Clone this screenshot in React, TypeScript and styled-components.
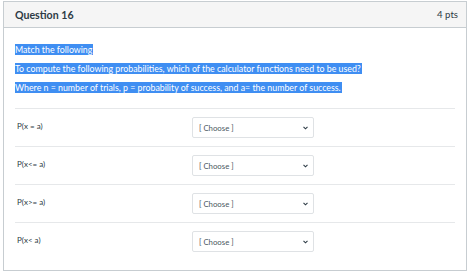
import styled, { createGlobalStyle } from "styled-components";

const GlobalStyle = createGlobalStyle`
  body {
    margin: 0;
    background: #ffffff;
    font-family: Lato, "Open Sans", sans-serif;
    color: #2d3b45;
  }
`;

const Card = styled.div`
  margin: 1px 0 0 3px;
  width: 464px;
  height: 270px;
  border: 1px solid #c7cdd1;
  box-sizing: border-box;
  display: flex;
  flex-direction: column;
`;

const Header = styled.div`
  height: 26px;
  box-sizing: border-box;
  background: #f5f5f5;
  border-bottom: 1px solid #c7cdd1;
  display: flex;
  align-items: center;
  justify-content: space-between;
  padding: 0 8px 0 11px;
`;

const Title = styled.div`
  font-size: 10.6px;
  font-weight: 700;
  color: #2d3b45;
`;

const Points = styled.div`
  font-size: 9.6px;
  color: #2d3b45;
`;

const Body = styled.div`
  padding: 16px 11px 0 11px;
`;

const Prompt = styled.p`
  margin: 0 0 7px;
  font-size: 8.8px;
  line-height: 12px;
`;

const Highlight = styled.span`
  background: #3f8ef2;
  color: #ffffff;
  padding: 0 1px 0 0;
`;

const Answers = styled.div`
  margin-top: 14px;
`;

const Row = styled.div`
  height: 38px;
  box-sizing: border-box;
  border-top: 1px solid #e6e8ea;
  display: grid;
  grid-template-columns: 175px 122px;
  align-items: center;
  padding-left: 2px;
`;

const Label = styled.div`
  font-size: 8px;
  margin-top: -3px;
`;

const Select = styled.div`
  height: 21px;
  box-sizing: border-box;
  border: 1px solid #dfe2e5;
  border-radius: 2px;
  display: flex;
  align-items: center;
  justify-content: space-between;
  padding: 0 5px 0 6px;
  font-size: 7.8px;
  color: #4a5862;
  background: #fff;
`;

const Chevron = () => (
  <svg width="5" height="4" viewBox="0 0 5 4">
    <path d="M0.5 0.8 L2.5 2.8 L4.5 0.8" fill="none" stroke="#2d3b45" strokeWidth="1.1" />
  </svg>
);

const labels = ["P(x = a)", "P(x<= a)", "P(x>= a)", "P(x< a)"];

export default function App() {
  return (
    <>
      <GlobalStyle />
      <Card>
        <Header>
          <Title>Question 16</Title>
          <Points>4 pts</Points>
        </Header>
        <Body>
          <Prompt>
            <Highlight>Match the following</Highlight>
          </Prompt>
          <Prompt>
            <Highlight>
              To compute the following probabilities, which of the calculator functions need to be used?
            </Highlight>
          </Prompt>
          <Prompt>
            <Highlight>
              Where n = number of trials, p = probability of success, and a= the number of success.
            </Highlight>
          </Prompt>
          <Answers>
            {labels.map((l) => (
              <Row key={l}>
                <Label>{l}</Label>
                <Select>
                  <span>[ Choose ]</span>
                  <Chevron />
                </Select>
              </Row>
            ))}
          </Answers>
        </Body>
      </Card>
    </>
  );
}
